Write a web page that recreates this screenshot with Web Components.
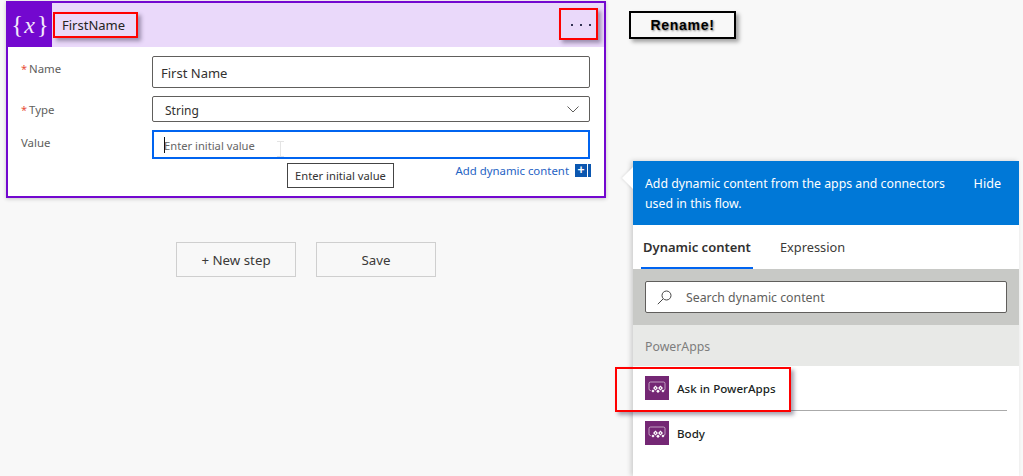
<!DOCTYPE html>
<html lang="en"><head><meta charset="utf-8"><title>Flow</title>
<style>
html,body{margin:0;padding:0;background:#f8f8f8;height:100%;overflow:hidden}
body{font-family:"Noto Sans","Open Sans",sans-serif;color:#333}
</style></head><body>
<flow-page></flow-page>
<template id="pa-icon"><svg width="24" height="24" viewBox="0 0 24 24" style="display:block"><rect width="24" height="24" fill="#742774"/><path d="M6 14.5H5.6A1.6 1.6 0 0 1 4 12.9V7.6A1.6 1.6 0 0 1 5.6 6H18.4A1.6 1.6 0 0 1 20 7.6V12.9A1.6 1.6 0 0 1 18.4 14.5H18" fill="none" stroke="#fff" stroke-opacity=".55" stroke-width="1"/><path d="M10.5 9.6l2.5 2.5-2.5 2.5-2.5-2.5zM15.5 9.6l2.5 2.5-2.5 2.5-2.5-2.5zM13 13.4l1.8 1.8-1.8 1.8-1.8-1.8zM8 13.4l1.6 1.6-1.6 1.6-1.6-1.6zM18 13.4l1.4 1.6-1.4 1.6-1.6-1.6z" fill="#fff"/><path d="M10.5 11.3l.8.8-.8.8-.8-.8zM15.5 11.3l.8.8-.8.8-.8-.8z" fill="#742774"/></svg></template>
<script>
const paIcon = () => document.getElementById('pa-icon').innerHTML;
class Base extends HTMLElement{
  render(html){ this.attachShadow({mode:'open'}).innerHTML = html; }
}
class MarkBox extends Base{ constructor(){super();this.render(`<style>
:host{display:flex;align-items:center;box-sizing:border-box;border:2px solid #f00;box-shadow:3px 3px 4px rgba(60,50,80,.45)}
</style><slot></slot>`);} }
class FieldRow extends Base{ constructor(){super();this.render(`<style>
:host{display:grid;grid-template-columns:131px 438px;align-items:start}
.l{font-size:11.4px;color:#605e5c;line-height:16px;padding-top:var(--lt,5px)}
.s{color:#e8503a;font-size:11px;margin-right:2px}
</style><div class="l" part="l">${this.hasAttribute('req')?'<span class="s">*</span>':''}${this.getAttribute('label')}</div><slot></slot>`);} }
class TextBox extends Base{ constructor(){super();this.render(`<style>
:host{display:flex;align-items:center;box-sizing:border-box;background:#fff;border:1px solid #605e5c;border-radius:2px;height:var(--h,32px);padding-left:var(--pl,8px);padding-top:var(--pt,2px);font-size:var(--fs,13px);color:#323130;justify-content:space-between}
svg{margin-right:10px;display:block;margin-top:-1px}
</style><slot></slot>${this.hasAttribute('chev')?'<svg width="12" height="7" viewBox="0 0 12 7"><path d="M.5.5L6 6l5.5-5.5" fill="none" stroke="#605e5c"/></svg>':''}`);} }
class ValueBox extends Base{ constructor(){super();this.render(`<style>
:host{display:flex;align-items:center;position:relative;box-sizing:border-box;background:#fff;border:2px solid #0064f0;height:29px;padding:2px 0 0 10px;font-size:11.2px;color:#666}
.c{position:absolute;left:10px;top:5px;width:1px;height:16px;background:#111}
.i{position:absolute;left:123px;top:9px;display:block}
</style><span class="c"></span><slot></slot><svg class="i" width="7" height="16" viewBox="0 0 7 16"><path d="M0 .5h7M0 15.5h7M3.5 .5v15" fill="none" stroke="#e4e4e4"/></svg>`);} }
class VarCard extends Base{ constructor(){super();this.render(`<style>
:host{display:block;position:relative;box-sizing:border-box;width:600px;height:197px;background:#fff;border:2px solid #7308cf;box-shadow:0 1px 4px rgba(0,0,0,.2)}
.head{display:flex;align-items:center;height:44px;background:#ead9fa;padding-right:6px}
.ico{width:44px;height:44px;background:#7308cf;color:#f3e9fc;display:flex;align-items:center;justify-content:center;font:25px/42px "Liberation Serif",serif;flex:none;margin-right:1px}
.ico i{font-size:24px;margin:0 2px 0 1px}
.name{width:85px;height:26px;padding-left:7px;font-size:13px;color:#252423;white-space:nowrap;background:#ead9fa}
.sp{flex:1}
.more{width:39px;height:32px;justify-content:center;gap:7px;margin-top:-2px;padding:2px 0 0 5px}
.more b{width:2px;height:2px;background:#333355;display:block}
.body{display:flex;flex-direction:column;gap:8px;padding:9px 0 0 13px}
.dyn{display:flex;align-items:center;justify-content:flex-end;gap:6px;margin:-8px 13px 0 0;height:20px;font-size:11.4px;color:#1f63c4;padding-top:1px}
.plus{display:flex;height:13px;margin-top:1px}
.plus span{width:12px;height:13px;background:#0b57b0;color:#fff;font:bold 12px/12px "Liberation Sans",sans-serif;text-align:center}
.plus u{width:3px;height:13px;background:#0b57b0;margin-left:1px;display:block}
.tip{position:absolute;left:279px;top:160px;box-sizing:border-box;width:107px;height:25px;background:#fff;border:1px solid #444;font-size:11.2px;line-height:24px;text-align:center;color:#333;white-space:nowrap}
</style>
<div class="head"><div class="ico"><span>{</span><i>x</i><span>}</span></div><mark-box class="name">FirstName</mark-box><div class="sp"></div><mark-box class="more"><b></b><b></b><b></b></mark-box></div>
<div class="body">
<field-row label="Name" req><text-box>First Name</text-box></field-row>
<field-row label="Type" req style="--lt:6px"><text-box chev style="--h:26px;--fs:12px;--pl:12px">String</text-box></field-row>
<field-row label="Value" style="--lt:5px"><value-box>Enter initial value</value-box></field-row>
<div class="dyn"><span>Add dynamic content</span><span class="plus"><span>+</span><u></u></span></div>
</div>
<div class="tip">Enter initial value</div>`);} }
class DynItem extends Base{ constructor(){super();this.render(`<style>
:host{display:flex;align-items:center;gap:8px;height:44px;font-size:11.6px;font-weight:500;color:#201f1e}
</style>${paIcon()}<slot></slot>`);} }
class DynPanel extends Base{ constructor(){super();this.render(`<style>
:host{display:block;position:relative;box-sizing:border-box;width:386px;height:315px;background:#fff;box-shadow:-2px 0 5px rgba(0,0,0,.18)}
.arrow{position:absolute;left:-11px;top:6px;width:0;height:0;border:11px solid transparent;border-left:0;border-right-color:#fff;filter:drop-shadow(-1px 0 1px rgba(0,0,0,.1))}
.blue{display:flex;justify-content:space-between;box-sizing:border-box;height:64px;background:#0078d7;color:#fff;padding:13px 18px 0 12px;font-size:12.3px;line-height:20px}
.blue p{margin:0;width:310px}
.blue span{font-size:12.6px;line-height:20px}
.tabs{display:flex;height:44px;font-size:13px;padding-left:8px;gap:25px;color:#3b3a39}
.tab{padding:0 2px;display:flex;align-items:center;box-sizing:border-box}
.tab+.tab{font-size:12.8px}
.tab.on{font-weight:600;border-bottom:2px solid #0064f0;color:#323130;padding-top:2px}
.search{background:#c8c9c6;height:56px;padding:12px 12px 0;box-sizing:border-box}
.box{display:flex;align-items:center;gap:14px;height:32px;box-sizing:border-box;background:#fff;border:1px solid #605e5c;border-radius:2px;padding-left:11px;font-size:12.3px;color:#605e5c}
.group{height:41px;background:#e8e9e7;display:flex;align-items:center;padding:2px 0 0 12px;box-sizing:border-box;font-size:12.3px;color:#7d7d7d}
.items{padding:0 12px}
.sep{height:1px;background:#aaa}
.mark{position:absolute;left:-18px;top:206px;width:176px;height:45px}
</style>
<div class="arrow"></div>
<div class="blue"><p>Add dynamic content from the apps and connectors used in this flow.</p><span>Hide</span></div>
<div class="tabs"><div class="tab on">Dynamic content</div><div class="tab">Expression</div></div>
<div class="search"><div class="box"><svg width="15" height="15" viewBox="0 0 15 15"><circle cx="9.5" cy="5.5" r="4.5" fill="none" stroke="#444"/><path d="M6 9L.8 14.2" stroke="#444" fill="none"/></svg><span>Search dynamic content</span></div></div>
<div class="group">PowerApps</div>
<div class="items"><dyn-item>Ask in PowerApps</dyn-item><div class="sep"></div><dyn-item>Body</dyn-item></div>
<mark-box class="mark"></mark-box>`);} }
class FlowPage extends Base{ constructor(){super();this.render(`<style>
:host{display:flex;width:1023px;height:476px;overflow:hidden;font-family:"Noto Sans","Open Sans",sans-serif}
.left{width:629px;flex:none;padding:1px 0 0 6px;box-sizing:border-box}
.btns{display:flex;gap:20px;margin:44px 0 0 170px}
.btn{width:120px;height:35px;box-sizing:border-box;border:1px solid #cfcfcf;display:flex;align-items:center;justify-content:center;font-size:13.3px;color:#3b3a39}
.right{display:flex;flex-direction:column;align-items:flex-start;padding-top:11px}
.rename{box-sizing:border-box;width:107px;height:28px;border:2px solid #000;display:flex;align-items:center;justify-content:center;font:bold 14px "Liberation Sans",sans-serif;letter-spacing:.7px;color:#000;background:#f8f8f8;box-shadow:3px 3px 4px rgba(0,0,0,.35);text-shadow:1px 1px 2px rgba(0,0,0,.5)}
dyn-panel{margin:122px 0 0 4px}
</style>
<div class="left"><var-card></var-card><div class="btns"><div class="btn">+ New step</div><div class="btn">Save</div></div></div>
<div class="right"><div class="rename">Rename!</div><dyn-panel></dyn-panel></div>`);} }
customElements.define('mark-box',MarkBox);
customElements.define('field-row',FieldRow);
customElements.define('text-box',TextBox);
customElements.define('value-box',ValueBox);
customElements.define('var-card',VarCard);
customElements.define('dyn-item',DynItem);
customElements.define('dyn-panel',DynPanel);
customElements.define('flow-page',FlowPage);
</script></body></html>
